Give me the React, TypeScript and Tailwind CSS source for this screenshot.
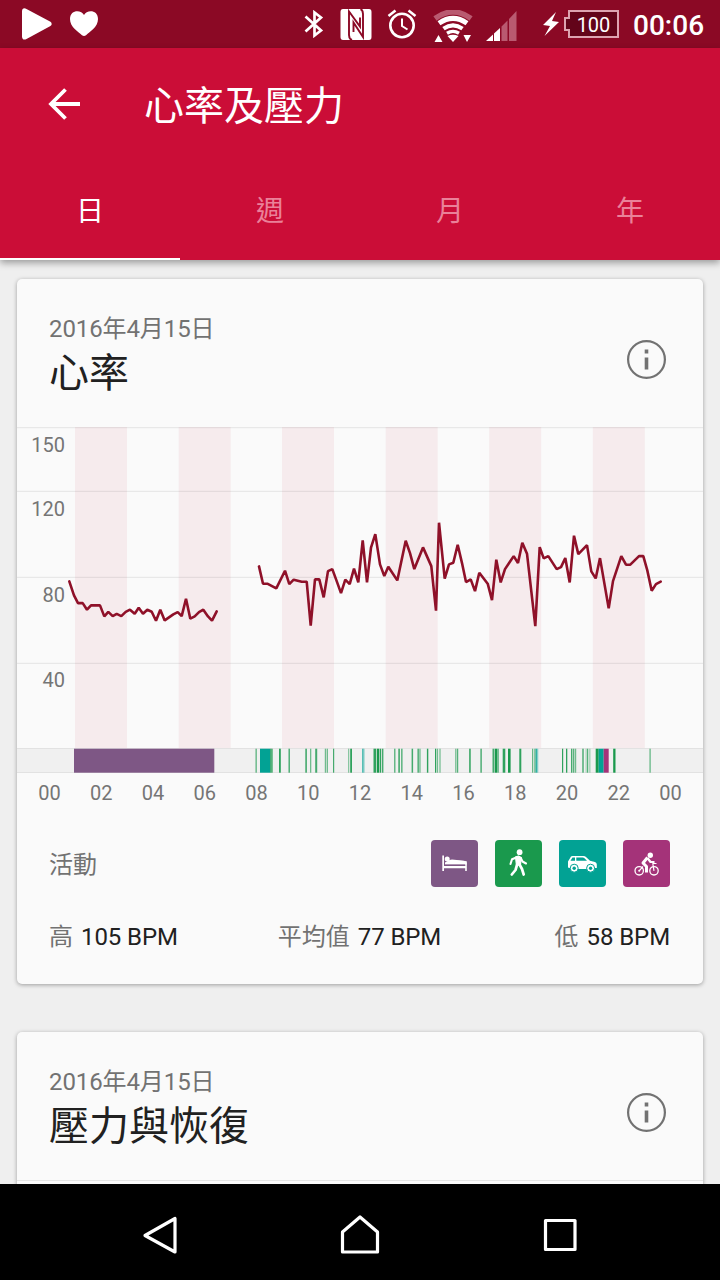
import React from 'react';

const SLEEP = '#7e5785';
const WALK = '#1a994d';
const DRIVE = '#02a294';
const BIKE = '#a43379';

// Status bar icons
const PlayIcon = () => (
  <svg className="w-8 h-8" viewBox="0 0 32 32" fill="#fff">
    <path d="M1 3.500C1 .6 3 -.4 5.500 1L29 13.500C31.200 14.800 31.200 17 29 18.300L5.500 31C3 32.400 1 31.300 1 28.500Z" />
  </svg>
);

const HeartIcon = () => (
  <svg className="w-7 h-7" viewBox="0 0 28 28" fill="#fff">
    <path d="M14 5C11.500-.5 0-.8 0 9c0 8 8 12.500 12 16.300q2 1.600 4 0C20 21.500 28 17 28 9 28-.8 16.500-.5 14 5Z" />
  </svg>
);

const BluetoothIcon = () => (
  <svg className="w-5 h-7" viewBox="0 0 20 28" fill="none" stroke="#fff" strokeWidth="2.700">
    <path d="M1.500 6.500 17 20.500 10.500 25.500V2.500L17 7.500 1.500 21.500" />
  </svg>
);

const NfcIcon = () => (
  <svg className="w-8 h-[31px]" viewBox="0 0 32 31">
    <path d="M3 0H29Q31.500 0 31.500 3V28Q31.500 31 29 31H3Q.5 31 .5 28V3Q.5 0 3 0Z" fill="#fff" />
    <path
      d="M12 31Q9 30 9 26V2.500L20 17.500V8.500M13.500 23V13.500L23 28V5Q23 1 20.500 0"
      fill="none"
      stroke="#8b0925"
      strokeWidth="1.900"
    />
  </svg>
);

const AlarmIcon = () => (
  <svg className="w-[30px] h-[30px]" viewBox="0 0 30 30" fill="none" stroke="#fff">
    <circle cx="15" cy="16.500" r="11.700" strokeWidth="2.600" />
    <path d="M15 9.500V17L20.500 20.500" strokeWidth="2" />
    <path d="M1.500 7 8.500 1.500M21.500 1.500 28.500 7" strokeWidth="2.600" />
  </svg>
);

const WifiIcon = () => (
  <svg className="w-10 h-8" viewBox="0 0 40 32" fill="none" stroke="#fff">
    <path d="M2 8.500Q20-4.500 38 8.500" stroke="#b95a70" strokeWidth="5.500" />
    <path d="M6 13.200Q20 3.500 34 13.200" strokeWidth="5" />
    <path d="M10.500 18.600Q20 12 29.500 18.600" strokeWidth="4.200" />
    <path d="M14 23.200Q20 19.500 26 23.200" strokeWidth="3.400" />
    <path d="M14.500 26Q20 23.500 25.500 26L20 32Z" fill="#fff" stroke="none" />
    <path d="M1.500 32 5.500 25 9.500 32ZM30.500 25H38L34 32Z" fill="#fff" stroke="none" />
  </svg>
);

const SignalIcon = () => (
  <svg className="w-8 h-[30px]" viewBox="0 0 32 30">
    <path d="M0 30 7 23.500V30Z" fill="#fff" />
    <path d="M8 22.500 14 17V30H8Z" fill="#fff" />
    <path d="M15.500 15.500 21.500 9.500V30H15.500ZM23 8 30.500 0V30H23Z" fill="#b95a70" />
  </svg>
);

const BoltIcon = () => (
  <svg className="w-4 h-6" viewBox="0 0 16 24" fill="#fff">
    <path d="M13 0 0 13 7 14 1.500 24 16 10 9 9Z" />
  </svg>
);

const Battery = () => (
  <div className="flex items-center">
    <div className="relative z-10 -mr-[2px] h-[14px] w-[6px] border-2 border-r-0 border-[#dda3b0] bg-[#630419]" />
    <div className="flex h-7 w-[51px] items-center justify-center border-2 border-[#dda3b0] bg-[#630419] pt-px text-[20px] leading-none">
      100
    </div>
  </div>
);

const StatusBar = () => (
  <div className="flex h-12 shrink-0 items-center bg-[#8b0925] text-white">
    <div className="ml-[21px]"><PlayIcon /></div>
    <div className="ml-[17px]"><HeartIcon /></div>
    <div className="ml-[206px]"><BluetoothIcon /></div>
    <div className="ml-4"><NfcIcon /></div>
    <div className="ml-[15px]"><AlarmIcon /></div>
    <div className="mt-[3px] ml-4"><WifiIcon /></div>
    <div className="mt-[3px] ml-[13px]"><SignalIcon /></div>
    <div className="ml-[25px]"><BoltIcon /></div>
    <div className="ml-[5px]"><Battery /></div>
    <span className="mt-[3px] ml-[14px] text-[28px] leading-none font-medium">00:06</span>
  </div>
);

// App bar
const TABS = ['日', '週', '月', '年'];

const AppBar = () => (
  <header className="relative z-10 h-[212px] shrink-0 bg-[#cb0d37] text-white shadow-[0_3px_7px_rgba(0,0,0,0.35)]">
    <div className="flex h-28 items-center pl-12">
      <svg className="h-8 w-8" viewBox="0 0 32 32" fill="none" stroke="#fff" strokeWidth="3.800">
        <path d="M32 16H3M17.500 1.500 3 16 17.500 30.500" />
      </svg>
      <h1 className="mt-[5px] ml-[64px] text-[40px] leading-none">心率及壓力</h1>
    </div>
    <nav className="flex h-[100px]">
      {TABS.map((tab, i) => (
        <div
          key={tab}
          className={
            i === 0
              ? 'flex flex-1 justify-center border-b-2 border-white pt-[38px] text-[28px] leading-none'
              : 'flex flex-1 justify-center pt-[38px] text-[28px] leading-none text-[#ea8199]'
          }
        >
          {tab}
        </div>
      ))}
    </nav>
  </header>
);

interface CardHeaderProps {
  date: string;
  title: string;
}

const CardHeader: React.FC<CardHeaderProps> = ({ date, title }) => (
  <div className="flex h-[148px] items-start justify-between pt-[37px] pr-[36px] pl-8">
    <div>
      <p className="text-[24px] leading-[26px] tracking-[-0.1px] text-[#727272]">{date}</p>
      <h2 className="mt-3 text-[40px] leading-[40px] text-[#212121]">{title}</h2>
    </div>
    <svg className="mt-[23px] h-10 w-10" viewBox="0 0 40 40" fill="none" stroke="#727272">
      <circle cx="19.500" cy="20.500" r="18.400" strokeWidth="2.200" />
      <path d="M19.500 18.500V30.500M19.500 10.500V14.500" strokeWidth="3.600" />
    </svg>
  </div>
);

// Heart rate chart
const BANDS = [75, 178.7, 282, 385.7, 489.2, 592.8];
const GRID = [427.5, 491.3, 577.3, 663.3];
const SCALE = [
  { label: '150', y: 451.5 },
  { label: '120', y: 515.5 },
  { label: '80', y: 601.5 },
  { label: '40', y: 687 },
];
const HOURS = ['00', '02', '04', '06', '08', '10', '12', '14', '16', '18', '20', '22', '00'];

const NIGHT =
  '69.3,581 74,595 78,602.7 82.7,602.7 87,609.3 91,605 100,605 104.3,616 108.3,611.5 112.7,615.7 116.7,613.5 121.3,615.7 125.7,611.5 130,609.3 134.7,613.3 138.7,607.3 143,613.3 147.3,609.3 151.7,611.3 156,620.3 160.3,609.3 164.7,620 173.3,614 177.7,611.7 181.7,615.7 186,598.3 190.3,618.3 194.7,616 199,611.7 203.3,609.3 208,616 212,620.3 216.7,611';

const DAY =
  '259,566 263,583.3 267.3,583.3 276.3,588 285,570.3 289.3,583.7 293.7,579.3 301.7,581.3 306.7,581.3 310.7,625.3 315,579 319.3,579 323.7,597 328,570.7 332.3,568.7 336.7,580.7 341,592.7 345.3,579.3 349.7,583.7 354,568.3 358.3,582 362.7,540 367,582 371,547.3 375.3,533.7 380,564 384.3,575.7 388.3,566.3 397.3,580 405.7,540.3 410,552.7 414.3,568.7 423,547 431.3,565.7 436,610.3 439,522.3 444.7,578.3 449,564 453.3,562.3 457.7,544.3 462,562.7 466,581.7 470.7,579 475,590.7 479.3,572.3 487.7,583.3 492,599.7 496.3,559.3 500.7,582 505,568.7 513.7,555.7 518,562.7 522.3,542.3 527,553.3 535.3,625.7 539.7,546.7 543.7,558 548.3,555.7 556.7,568.7 561,566.7 565.3,557.7 569.7,582 574,535.3 578.3,553.7 587,544.7 591.3,571 595.7,578 600,557.7 608.7,608 613,580.7 621.3,555.7 626,564.3 630.3,564.3 639,555.7 643.3,555.7 647.3,570 651.7,590.3 656,583.7 660.7,581.3';

// [x, width, colour, opacity]
const ACTIVITY: [number, number, string, number][] = [
  [74, 140.3, SLEEP, 1],
  [255.5, 1.3, WALK, 0.7],
  [260, 10.3, DRIVE, 1],
  [270.3, 1.3, WALK, 1],
  [271.6, 1.2, WALK, 0.7],
  [279, 1.8, WALK, 0.9],
  [288.5, 1.4, WALK, 0.8],
  [305.3, 1.6, WALK, 0.8],
  [310, 1.3, WALK, 0.6],
  [315.2, 2, WALK, 0.8],
  [324.8, 1.4, WALK, 0.6],
  [326.8, 1.2, WALK, 0.6],
  [333, 1.2, WALK, 0.8],
  [348.2, 1, WALK, 0.6],
  [350.2, 1.8, WALK, 0.9],
  [362.2, 1.3, DRIVE, 0.8],
  [363.5, 1.2, DRIVE, 0.35],
  [373.5, 2.8, WALK, 0.9],
  [377, 2, WALK, 1],
  [379.6, 1.6, WALK, 0.9],
  [382, 1.4, WALK, 0.8],
  [394.2, 1.2, WALK, 0.8],
  [398.3, 1.6, WALK, 0.8],
  [401.2, 1.3, WALK, 0.8],
  [411.6, 1.5, WALK, 0.8],
  [417.4, 1.6, WALK, 0.7],
  [419.3, 1.3, WALK, 0.6],
  [426.9, 1.4, WALK, 0.9],
  [435, 1.3, WALK, 0.9],
  [437, 1.1, WALK, 0.6],
  [439.4, 1.2, WALK, 0.6],
  [455.3, 1.1, WALK, 0.7],
  [457.1, 1.1, WALK, 0.8],
  [469.2, 1.5, WALK, 0.9],
  [480.4, 1.4, WALK, 0.8],
  [492.5, 2, WALK, 0.8],
  [495, 2, WALK, 1],
  [497.3, 1.4, WALK, 0.8],
  [502.7, 2.6, WALK, 0.9],
  [508, 2.6, WALK, 1],
  [519.3, 2, WALK, 0.9],
  [532.2, 1, WALK, 0.8],
  [534.2, 1.4, WALK, 0.6],
  [535.6, 1.8, DRIVE, 0.8],
  [537.4, 1, DRIVE, 0.3],
  [562, 1.2, WALK, 0.9],
  [566, 1.3, WALK, 0.9],
  [571, 1.4, WALK, 0.8],
  [573, 1.4, WALK, 0.7],
  [575, 1.2, WALK, 0.6],
  [582.3, 1.4, WALK, 0.8],
  [585.7, 0.8, WALK, 0.5],
  [587.2, 1, WALK, 0.9],
  [589.5, 0.8, WALK, 0.6],
  [595.7, 3, WALK, 1],
  [598.7, 5, DRIVE, 1],
  [603.7, 5, BIKE, 1],
  [613.2, 2.3, WALK, 1],
  [649.4, 1.4, WALK, 0.6],
];

const HeartRateChart = () => (
  <div>
    <svg className="block h-[346px] w-full" viewBox="17 427 686 346">
      {BANDS.map(x => (
        <rect key={x} x={x} y="427" width="52" height="321" fill="#f6ebed" />
      ))}
      {GRID.map(y => (
        <path key={y} d={`M17 ${y}H703`} stroke="#000" strokeOpacity="0.07" strokeWidth="1.300" />
      ))}
      {SCALE.map(({ label, y }) => (
        <text key={label} x="65" y={y} textAnchor="end" fontSize="20" fill="#757575">
          {label}
        </text>
      ))}
      <rect x="17" y="748" width="686" height="25" fill="#f0f0f0" />
      <path d="M17 748.500H703M17 772.500H703" stroke="#e2e2e2" />
      {ACTIVITY.map(([x, width, fill, opacity]) => (
        <rect key={x} x={x} y="748.700" width={width} height="24" fill={fill} opacity={opacity} />
      ))}
      <g fill="none" stroke="#8f1129" strokeWidth="2.600" strokeLinejoin="bevel" strokeLinecap="round">
        <polyline points={NIGHT} transform="translate(0 .4)" />
        <polyline points={DAY} transform="translate(0 .4)" />
      </g>
    </svg>
    <div className="mt-[9px] ml-[6.500px] flex w-[673px] text-[20px] leading-[22px] text-[#757575]">
      {HOURS.map((hour, i) => (
        <span key={i} className="flex-1 text-center">{hour}</span>
      ))}
    </div>
  </div>
);

// Activity badges
const BedIcon = () => (
  <svg className="h-full w-full" viewBox="0 0 47 47" fill="#fff">
    <path d="M11.300 15.500H13V26H34V21.800L20 20 35.800 21.200V31H34.200V28.200H13V31H11.300Z" />
    <circle cx="16.200" cy="19" r="2.500" />
    <path d="M14 22.500 18.500 20 21 19.500 33 20.700Q35.800 21.500 35.800 24.500H14Z" />
    <path d="M13 25.200H34.500" stroke={SLEEP} strokeWidth="0.900" />
  </svg>
);

const WalkIcon = () => (
  <svg className="h-full w-full" viewBox="0 0 47 47" fill="none" stroke="#fff" strokeLinecap="round" strokeLinejoin="round">
    <circle cx="24.600" cy="12.200" r="2.900" fill="#fff" stroke="none" />
    <path d="M20.500 17 23.500 16 26.200 17.500 25.500 24.500 21.500 25.500Z" fill="#fff" strokeWidth="1.200" />
    <path d="M22 17.300 17 19.300 15.500 24M25.800 18 27.500 21.500 31 23.500" strokeWidth="2.100" />
    <path d="M22 25 20.500 30 16.800 34.500M24.500 24.500 27 29 28.700 34.500" strokeWidth="2.700" />
  </svg>
);

const CarIcon = () => (
  <svg className="h-full w-full" viewBox="0 0 47 47" fill="#fff">
    <path d="M9 21.500 12 16.500Q12.500 16 13.500 16H24.500Q26 16 27 17L31 20.800 36 22Q37.800 22.600 37.800 24.500V28H36L32 26 27.500 29H18L15 26 12 28.500 9 27.500Z" />
    <path d="M11.500 20.800 13.500 17.600H16V20.800ZM17.300 17.600H23.700Q24.700 17.600 25.500 18.300L28 20.800H17.300Z" fill={DRIVE} />
    <g stroke={DRIVE} strokeWidth="1">
      <circle cx="15.200" cy="28.200" r="4" />
      <circle cx="31.600" cy="28.200" r="4" />
    </g>
    <circle cx="15.200" cy="28.200" r="1.700" fill={DRIVE} />
    <circle cx="31.600" cy="28.200" r="1.700" fill={DRIVE} />
  </svg>
);

const BikeIcon = () => (
  <svg className="h-full w-full" viewBox="0 0 47 47" fill="none" stroke="#fff" strokeLinejoin="round">
    <circle cx="27.300" cy="15.300" r="2.700" fill="#fff" stroke="none" />
    <circle cx="16.200" cy="30.800" r="4.200" strokeWidth="1.300" />
    <circle cx="31" cy="30.800" r="4.200" strokeWidth="1.300" />
    <path d="M16.200 30.800 20 26.500M31 30.800 29.800 23.500H33.500" strokeWidth="1.200" />
    <path d="M24.500 17.500 20 23 23.500 26.500V32.500" strokeWidth="3" />
    <path d="M24.500 18 27.500 22H31.500" strokeWidth="2.200" />
    <circle cx="16.200" cy="30.800" r="1" fill="#fff" stroke="none" />
  </svg>
);

const StatItem = ({ label, value }: { label: string; value: string }) => (
  <div className="flex items-center gap-2">
    <span className="text-[#727272]">{label}</span>
    <span className="tracking-[-0.1px] text-[#212121]">{value} BPM</span>
  </div>
);

const CARD = 'rounded-[5px] bg-[#fafafa] shadow-[0_1px_4px_rgba(0,0,0,0.35)]';

const App: React.FC = () => (
  <div
    lang="zh-Hant"
    className="flex h-[1280px] w-[720px] flex-col overflow-hidden bg-[#efefef] font-[Roboto,'Noto_Sans_CJK_TC',sans-serif]"
  >
    <StatusBar />
    <AppBar />

    <main className="flex-1 overflow-hidden px-[17px] pt-[19px]">
      <section className={`${CARD} h-[705px]`}>
        <CardHeader date="2016年4月15日" title="心率" />
        <HeartRateChart />
        <div className="mt-9 flex items-center justify-between pr-[33px] pl-8">
          <span className="pt-0.5 text-[24px] leading-none text-[#727272]">活動</span>
          <div className="flex gap-[17px]">
            <div className="h-[47px] w-[47px] rounded bg-[#7e5785]"><BedIcon /></div>
            <div className="h-[47px] w-[47px] rounded bg-[#1a994d]"><WalkIcon /></div>
            <div className="h-[47px] w-[47px] rounded bg-[#02a294]"><CarIcon /></div>
            <div className="h-[47px] w-[47px] rounded bg-[#a43379]"><BikeIcon /></div>
          </div>
        </div>
        <div className="mt-[37px] grid grid-cols-[1fr_auto_1fr] pr-[33px] pl-8 text-[24px] leading-[26px]">
          <StatItem label="高" value="105" />
          <StatItem label="平均值" value="77" />
          <div className="flex justify-end">
            <StatItem label="低" value="58" />
          </div>
        </div>
      </section>

      <section className={`${CARD} mt-12 h-[300px]`}>
        <CardHeader date="2016年4月15日" title="壓力與恢復" />
        <div className="border-t border-[#e4e4e4]" />
      </section>
    </main>

    <nav className="flex h-24 shrink-0 items-center bg-black px-[60px] pt-1.5">
      <div className="flex flex-1 justify-center">
        <svg className="h-10 w-10" viewBox="0 0 40 40" fill="none" stroke="#fff" strokeWidth="3.200" strokeLinejoin="round">
          <path d="M5 20.500 35 3.500V37Z" />
        </svg>
      </div>
      <div className="flex flex-1 justify-center">
        <svg className="h-10 w-10" viewBox="0 0 40 40" fill="none" stroke="#fff" strokeWidth="3.200" strokeLinejoin="round">
          <path d="M20 2 37.500 17V37H2.500V17Z" />
        </svg>
      </div>
      <div className="flex flex-1 justify-center">
        <svg className="h-10 w-10" viewBox="0 0 40 40" fill="none" stroke="#fff" strokeWidth="3.200" strokeLinejoin="round">
          <path d="M5.500 5.500H35V34.500H5.500Z" />
        </svg>
      </div>
    </nav>
  </div>
);

export default App;
